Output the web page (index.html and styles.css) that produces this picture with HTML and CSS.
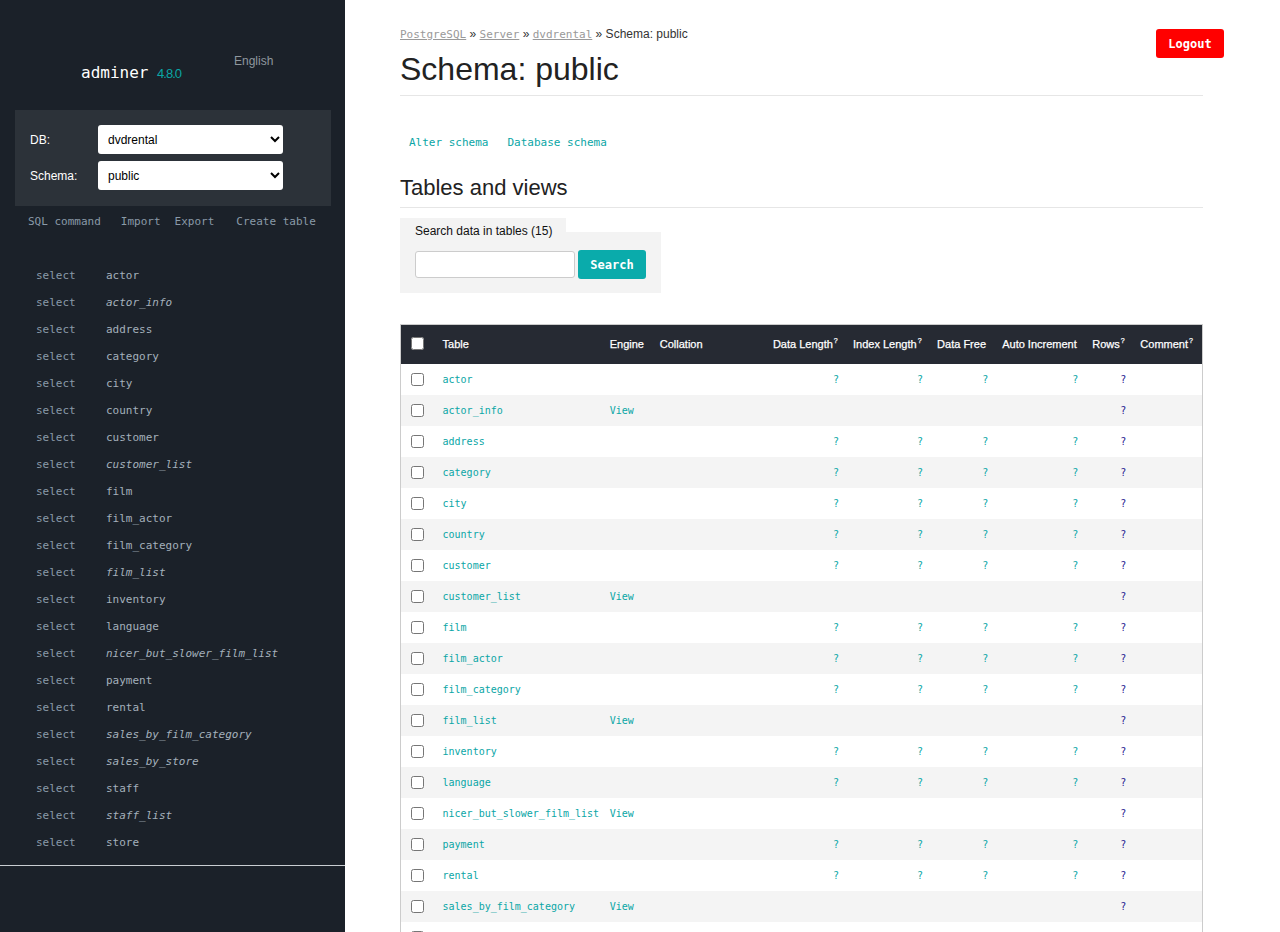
FILE: index.html
```html
<!DOCTYPE html>
<html lang="en">
<head>
<meta charset="utf-8">
<title>Schema: public - Adminer</title>
<link rel="stylesheet" href="styles.css">
</head>
<body>
<div class="layout">
  <aside class="sidebar">
    <div class="brand">
      <h1 class="logo">adminer <span class="version">4.8.0</span></h1>
      <div class="lang">English</div>
    </div>
    <form class="dbpanel">
      <div class="dbrow"><label>DB:</label><select><option>dvdrental</option></select></div>
      <div class="dbrow"><label>Schema:</label><select><option>public</option></select></div>
    </form>
    <div class="sidelinks">
      <a class="l1">SQL command</a><a class="l2">Import</a><a class="l3">Export</a><a class="l4">Create table</a>
    </div>
    <ul class="tables">
      <li><a class="sel">select</a><a class="tn">actor</a></li>
      <li><a class="sel">select</a><a class="tn view">actor_info</a></li>
      <li><a class="sel">select</a><a class="tn">address</a></li>
      <li><a class="sel">select</a><a class="tn">category</a></li>
      <li><a class="sel">select</a><a class="tn">city</a></li>
      <li><a class="sel">select</a><a class="tn">country</a></li>
      <li><a class="sel">select</a><a class="tn">customer</a></li>
      <li><a class="sel">select</a><a class="tn view">customer_list</a></li>
      <li><a class="sel">select</a><a class="tn">film</a></li>
      <li><a class="sel">select</a><a class="tn">film_actor</a></li>
      <li><a class="sel">select</a><a class="tn">film_category</a></li>
      <li><a class="sel">select</a><a class="tn view">film_list</a></li>
      <li><a class="sel">select</a><a class="tn">inventory</a></li>
      <li><a class="sel">select</a><a class="tn">language</a></li>
      <li><a class="sel">select</a><a class="tn view">nicer_but_slower_film_list</a></li>
      <li><a class="sel">select</a><a class="tn">payment</a></li>
      <li><a class="sel">select</a><a class="tn">rental</a></li>
      <li><a class="sel">select</a><a class="tn view">sales_by_film_category</a></li>
      <li><a class="sel">select</a><a class="tn view">sales_by_store</a></li>
      <li><a class="sel">select</a><a class="tn">staff</a></li>
      <li><a class="sel">select</a><a class="tn view">staff_list</a></li>
      <li><a class="sel">select</a><a class="tn">store</a></li>
    </ul>
  </aside>
  <main class="content">
    <div class="crumbs"><a>PostgreSQL</a> » <a>Server</a> » <a>dvdrental</a> » Schema: public</div>
    <button class="logout">Logout</button>
    <h2 class="title">Schema: public</h2>
    <p class="actions"><a>Alter schema</a><a>Database schema</a></p>
    <h3 class="subtitle">Tables and views</h3>
    <div class="search">
      <div class="search-tab">Search data in tables (15)</div>
      <div class="search-box"><input type="text" class="search-input"><button class="search-btn">Search</button></div>
    </div>
    <table class="grid">
      <colgroup>
        <col class="c-chk"><col class="c-name"><col class="c-engine"><col class="c-coll"><col class="c-dl"><col class="c-il"><col class="c-df"><col class="c-ai"><col class="c-rows"><col class="c-comm">
      </colgroup>
      <thead>
        <tr>
          <th class="chk"><input type="checkbox"></th>
          <th>Table</th><th>Engine</th><th>Collation</th>
          <th>Data Length<sup>?</sup></th><th>Index Length<sup>?</sup></th><th>Data Free</th><th>Auto Increment</th><th>Rows<sup>?</sup></th><th>Comment<sup>?</sup></th>
        </tr>
      </thead>
      <tbody>
        <tr><td class="chk"><input type="checkbox"></td><td><a class="tl">actor</a></td><td></td><td></td><td class="num"><a>?</a></td><td class="num"><a>?</a></td><td class="num"><a>?</a></td><td class="num"><a>?</a></td><td class="num"><a class="rl">?</a></td><td></td></tr>
        <tr><td class="chk"><input type="checkbox"></td><td><a class="tl">actor_info</a></td><td class="eng">View</td><td></td><td></td><td></td><td></td><td></td><td class="num"><a class="rl">?</a></td><td></td></tr>
        <tr><td class="chk"><input type="checkbox"></td><td><a class="tl">address</a></td><td></td><td></td><td class="num"><a>?</a></td><td class="num"><a>?</a></td><td class="num"><a>?</a></td><td class="num"><a>?</a></td><td class="num"><a class="rl">?</a></td><td></td></tr>
        <tr><td class="chk"><input type="checkbox"></td><td><a class="tl">category</a></td><td></td><td></td><td class="num"><a>?</a></td><td class="num"><a>?</a></td><td class="num"><a>?</a></td><td class="num"><a>?</a></td><td class="num"><a class="rl">?</a></td><td></td></tr>
        <tr><td class="chk"><input type="checkbox"></td><td><a class="tl">city</a></td><td></td><td></td><td class="num"><a>?</a></td><td class="num"><a>?</a></td><td class="num"><a>?</a></td><td class="num"><a>?</a></td><td class="num"><a class="rl">?</a></td><td></td></tr>
        <tr><td class="chk"><input type="checkbox"></td><td><a class="tl">country</a></td><td></td><td></td><td class="num"><a>?</a></td><td class="num"><a>?</a></td><td class="num"><a>?</a></td><td class="num"><a>?</a></td><td class="num"><a class="rl">?</a></td><td></td></tr>
        <tr><td class="chk"><input type="checkbox"></td><td><a class="tl">customer</a></td><td></td><td></td><td class="num"><a>?</a></td><td class="num"><a>?</a></td><td class="num"><a>?</a></td><td class="num"><a>?</a></td><td class="num"><a class="rl">?</a></td><td></td></tr>
        <tr><td class="chk"><input type="checkbox"></td><td><a class="tl">customer_list</a></td><td class="eng">View</td><td></td><td></td><td></td><td></td><td></td><td class="num"><a class="rl">?</a></td><td></td></tr>
        <tr><td class="chk"><input type="checkbox"></td><td><a class="tl">film</a></td><td></td><td></td><td class="num"><a>?</a></td><td class="num"><a>?</a></td><td class="num"><a>?</a></td><td class="num"><a>?</a></td><td class="num"><a class="rl">?</a></td><td></td></tr>
        <tr><td class="chk"><input type="checkbox"></td><td><a class="tl">film_actor</a></td><td></td><td></td><td class="num"><a>?</a></td><td class="num"><a>?</a></td><td class="num"><a>?</a></td><td class="num"><a>?</a></td><td class="num"><a class="rl">?</a></td><td></td></tr>
        <tr><td class="chk"><input type="checkbox"></td><td><a class="tl">film_category</a></td><td></td><td></td><td class="num"><a>?</a></td><td class="num"><a>?</a></td><td class="num"><a>?</a></td><td class="num"><a>?</a></td><td class="num"><a class="rl">?</a></td><td></td></tr>
        <tr><td class="chk"><input type="checkbox"></td><td><a class="tl">film_list</a></td><td class="eng">View</td><td></td><td></td><td></td><td></td><td></td><td class="num"><a class="rl">?</a></td><td></td></tr>
        <tr><td class="chk"><input type="checkbox"></td><td><a class="tl">inventory</a></td><td></td><td></td><td class="num"><a>?</a></td><td class="num"><a>?</a></td><td class="num"><a>?</a></td><td class="num"><a>?</a></td><td class="num"><a class="rl">?</a></td><td></td></tr>
        <tr><td class="chk"><input type="checkbox"></td><td><a class="tl">language</a></td><td></td><td></td><td class="num"><a>?</a></td><td class="num"><a>?</a></td><td class="num"><a>?</a></td><td class="num"><a>?</a></td><td class="num"><a class="rl">?</a></td><td></td></tr>
        <tr><td class="chk"><input type="checkbox"></td><td><a class="tl">nicer_but_slower_film_list</a></td><td class="eng">View</td><td></td><td></td><td></td><td></td><td></td><td class="num"><a class="rl">?</a></td><td></td></tr>
        <tr><td class="chk"><input type="checkbox"></td><td><a class="tl">payment</a></td><td></td><td></td><td class="num"><a>?</a></td><td class="num"><a>?</a></td><td class="num"><a>?</a></td><td class="num"><a>?</a></td><td class="num"><a class="rl">?</a></td><td></td></tr>
        <tr><td class="chk"><input type="checkbox"></td><td><a class="tl">rental</a></td><td></td><td></td><td class="num"><a>?</a></td><td class="num"><a>?</a></td><td class="num"><a>?</a></td><td class="num"><a>?</a></td><td class="num"><a class="rl">?</a></td><td></td></tr>
        <tr><td class="chk"><input type="checkbox"></td><td><a class="tl">sales_by_film_category</a></td><td class="eng">View</td><td></td><td></td><td></td><td></td><td></td><td class="num"><a class="rl">?</a></td><td></td></tr>
        <tr><td class="chk"><input type="checkbox"></td><td><a class="tl">sales_by_store</a></td><td class="eng">View</td><td></td><td></td><td></td><td></td><td></td><td class="num"><a class="rl">?</a></td><td></td></tr>
        <tr><td class="chk"><input type="checkbox"></td><td><a class="tl">staff</a></td><td></td><td></td><td class="num"><a>?</a></td><td class="num"><a>?</a></td><td class="num"><a>?</a></td><td class="num"><a>?</a></td><td class="num"><a class="rl">?</a></td><td></td></tr>
        <tr><td class="chk"><input type="checkbox"></td><td><a class="tl">staff_list</a></td><td class="eng">View</td><td></td><td></td><td></td><td></td><td></td><td class="num"><a class="rl">?</a></td><td></td></tr>
        <tr><td class="chk"><input type="checkbox"></td><td><a class="tl">store</a></td><td></td><td></td><td class="num"><a>?</a></td><td class="num"><a>?</a></td><td class="num"><a>?</a></td><td class="num"><a>?</a></td><td class="num"><a class="rl">?</a></td><td></td></tr>
      </tbody>
    </table>
  </main>
</div>
</body>
</html>
```

FILE: styles.css
```css
html { overflow: hidden; }
body {
  margin: 0;
  font-family: "Liberation Sans", Arial, sans-serif;
  font-size: 12px;
  color: #333;
  background: #fff;
}
a { text-decoration: none; cursor: pointer; }

.layout { display: flex; align-items: stretch; min-height: 100vh; }

/* Sidebar */
.sidebar {
  width: 345px;
  flex: 0 0 345px;
  background: #1b2129;
  font-family: "DejaVu Sans Mono", monospace;
}
.brand {
  box-sizing: border-box;
  height: 110px;
  display: flex;
  align-items: flex-start;
  padding: 54px 0 0 81px;
}
.logo {
  margin: 9px 0 0 0;
  font-family: "DejaVu Sans Mono", monospace;
  font-weight: normal;
  font-size: 16px;
  line-height: 20px;
  color: #fff;
}
.version {
  font-family: "Liberation Sans", Arial, sans-serif;
  font-size: 13px;
  letter-spacing: -1px;
  color: #0aa6a6;
  margin-left: -1px;
}
.lang {
  font-family: "Liberation Sans", Arial, sans-serif;
  font-size: 12px;
  line-height: 14px;
  color: #8f979e;
  margin-left: 53px;
}
.dbpanel {
  margin: 0 14px 0 15px;
  background: #2c3239;
  padding: 15px 0 16px 15px;
  display: flex;
  flex-direction: column;
  gap: 7px;
}
.dbrow { display: flex; align-items: center; }
.dbrow label {
  width: 68px;
  font-family: "Liberation Sans", Arial, sans-serif;
  font-size: 12px;
  color: #fff;
}
.dbrow select {
  width: 185px;
  height: 29px;
  border: none;
  border-radius: 3px;
  background: #fff;
  font-family: "Liberation Sans", Arial, sans-serif;
  font-size: 12px;
  color: #000;
  padding: 0 6px;
}
.sidelinks {
  margin-top: 8px;
  padding-left: 28px;
  font-size: 11px;
  line-height: 15px;
  display: flex;
}
.sidelinks a { color: #8a9aa8; }
.sidelinks .l2 { margin-left: 20px; }
.sidelinks .l3 { margin-left: 14px; }
.sidelinks .l4 { margin-left: 22px; }
.tables {
  list-style: none;
  margin: 33px 0 0 0;
  padding: 0 0 9px 36px;
  border-bottom: 1px solid #c9cdd1;
  font-size: 11px;
}
.tables li { height: 27px; line-height: 27px; display: flex; }
.tables .sel { color: #8a9aa8; width: 70px; }
.tables .tn { color: #a4b0bb; }
.tables .tn.view { font-style: italic; }

/* Content */
.content {
  position: relative;
  flex: 1;
  padding: 27px 78px 40px 55px;
}
.crumbs { font-size: 12px; line-height: 14px; color: #333; }
.crumbs a {
  font-family: "DejaVu Sans Mono", monospace;
  font-size: 11px;
  color: #999;
  text-decoration: underline;
}
.logout {
  position: absolute;
  top: 29px;
  right: 57px;
  width: 68px;
  height: 29px;
  border: none;
  border-radius: 3px;
  background: #f00;
  color: #fff;
  font-family: "DejaVu Sans Mono", monospace;
  font-weight: bold;
  font-size: 12px;
  padding: 0;
}
.title {
  margin: 9px 0 0 0;
  padding-bottom: 7px;
  font-size: 32px;
  line-height: 37px;
  font-weight: normal;
  color: #222;
  border-bottom: 1px solid #e6e6e6;
}
.actions {
  margin: 39px 0 0 0;
  padding-left: 9px;
  font-family: "DejaVu Sans Mono", monospace;
  font-size: 11px;
  line-height: 15px;
  display: flex;
  gap: 19px;
}
.actions a { color: #0aa6a6; }
.subtitle {
  margin: 25px 0 0 0;
  padding-bottom: 6px;
  font-size: 22px;
  line-height: 26px;
  font-weight: normal;
  color: #222;
  border-bottom: 1px solid #e6e6e6;
}
.search { margin-top: 10px; width: 261px; }
.search-tab {
  box-sizing: border-box;
  width: 166px;
  height: 14px;
  background: #f3f3f3;
  padding: 6px 0 0 15px;
  line-height: 14px;
  font-size: 12px;
  color: #111;
  white-space: nowrap;
}
.search-box {
  background: #f3f3f3;
  padding: 18px 0 14px 15px;
  display: flex;
  align-items: center;
  gap: 3px;
}
.search-input {
  box-sizing: border-box;
  width: 160px;
  height: 27px;
  border: 1px solid #ccc;
  border-radius: 3px;
  margin: 0;
}
.search-btn {
  width: 68px;
  height: 29px;
  border: none;
  border-radius: 3px;
  background: #0aabab;
  color: #fff;
  font-family: "DejaVu Sans Mono", monospace;
  font-weight: bold;
  font-size: 12px;
  padding: 0;
}

/* Table */
.grid {
  margin-top: 31px;
  width: 803px;
  table-layout: fixed;
  border-collapse: collapse;
  border: 1px solid #ccc;
}
.c-chk { width: 32px; }
.c-name { width: 167px; }
.c-engine { width: 50px; }
.c-coll { width: 113px; }
.c-dl { width: 80px; }
.c-il { width: 84px; }
.c-df { width: 65px; }
.c-ai { width: 90px; }
.c-rows { width: 48px; }
.c-comm { width: 72px; }
.grid th {
  background: #262a33;
  color: #fff;
  height: 37px;
  padding: 0 0 2px 10px;
  text-align: left;
  font-size: 11px;
  font-weight: normal;
  white-space: nowrap;
  -webkit-text-stroke: 0.25px #fff;
}
.grid th sup { font-size: 7px; vertical-align: 5px; margin-left: 1px; }
.grid td {
  height: 31px;
  padding: 0 0 0 10px;
  font-family: "DejaVu Sans Mono", monospace;
  font-size: 10px;
  white-space: nowrap;
}
.grid tbody tr:nth-child(even) td { background: #f4f4f4; }
.grid .chk { padding-left: 10px; }
.grid .chk input { margin: 0; width: 13px; height: 13px; vertical-align: middle; }
.grid .tl { color: #0aa6a6; }
.grid .eng { color: #0aa6a6; }
.grid td.num { text-align: right; padding-right: 4px; }
.grid td.num a { color: #0aa6a6; }
.grid td.num a.rl { color: #1f2190; }
```
